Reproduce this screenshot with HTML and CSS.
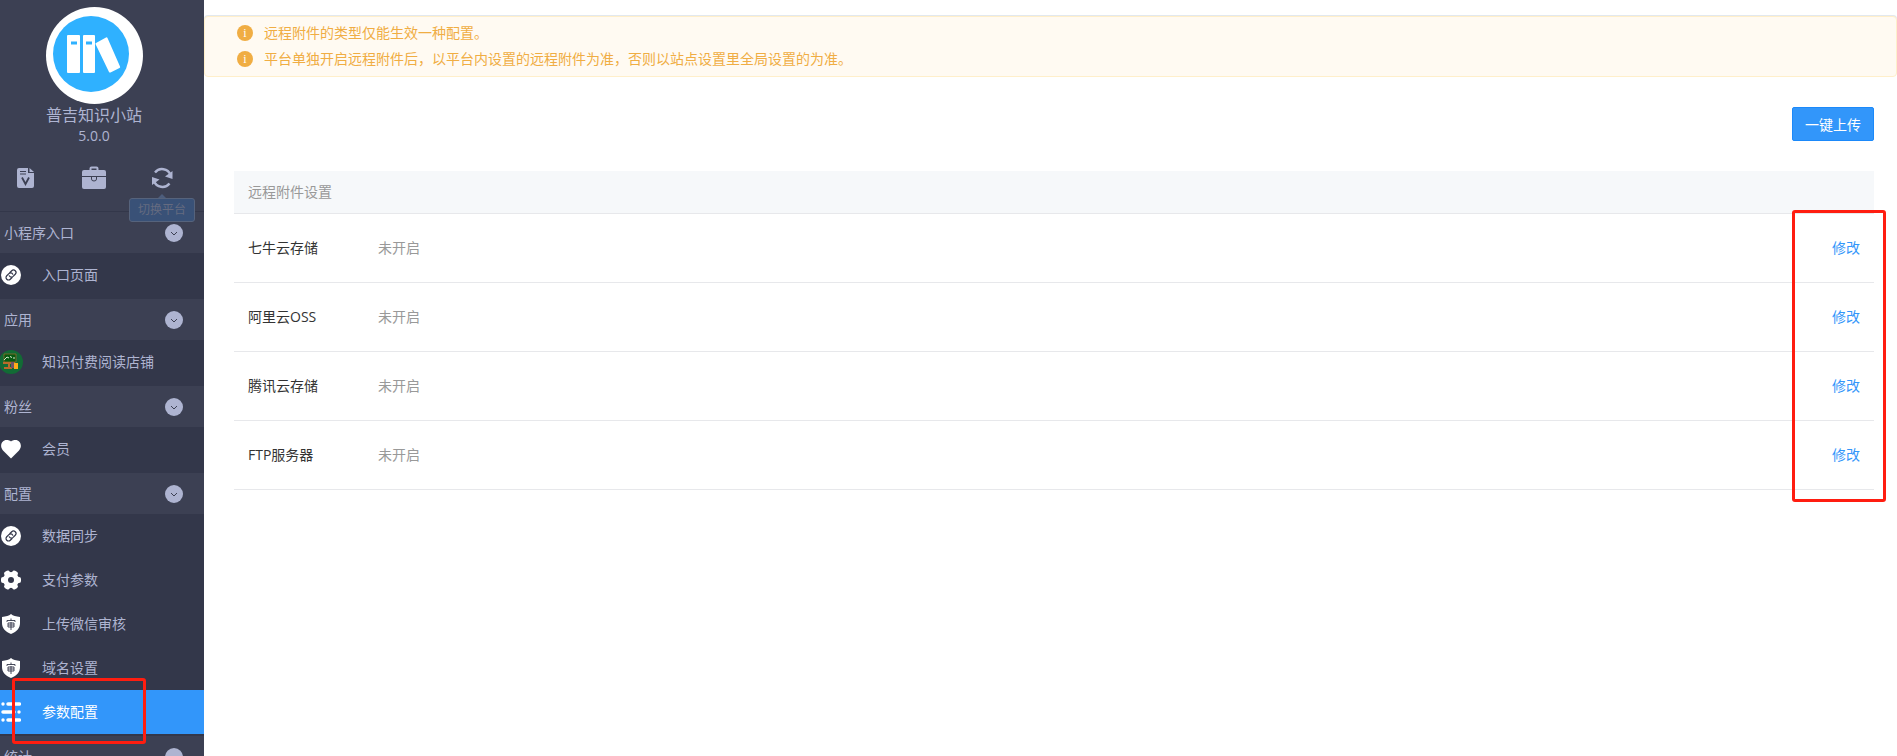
FILE: index.html
```
<!DOCTYPE html>
<html lang="zh-CN">
<head>
  <meta charset="UTF-8">
  <meta name="viewport" content="width=device-width, initial-scale=1.0">
  <title>远程附件设置</title>
  <link rel="stylesheet" href="styles.css">
</head>
<body>
  <svg width="0" height="0" class="sprite">
    <symbol id="down" viewBox="0 0 18 18">
      <circle cx="9" cy="9" r="9" fill="#aeb4d1"/>
      <path d="M6 8l3 3 3-3" fill="none" stroke="#3c4053"/>
    </symbol>
    <symbol id="link" viewBox="0 0 20 20">
      <circle cx="10" cy="10" r="10" fill="#fff"/>
      <g transform="rotate(-45 10 10)" fill="none" stroke="#33374a" stroke-width="1.200" stroke-linecap="round">
        <path d="M9 12.500H6.500a2.500 2.500 0 0 1 0-5h3a2.500 2.500 0 0 1 2.300 3.200"/>
        <path d="M11 7.500h2.500a2.500 2.500 0 0 1 0 5h-3a2.500 2.500 0 0 1-2.300-3.200"/>
      </g>
    </symbol>
    <symbol id="shield" viewBox="0 0 20 20">
      <path d="M10 0c2 1.800 5 2.600 9 3v6c0 5-3 8.500-9 11C4 17.500 1 14 1 9V3c4-.4 7-1.200 9-3z" fill="#fff"/>
      <path d="M10 4.500v2M6 8V6.500h8V8M7 9h6v4H7zM7 11h6M10 8v8" fill="none" stroke="#33374a" stroke-width=".9"/>
    </symbol>
  </svg>

  <div class="wrapper">
    <aside class="sidebar">
      <div class="brand">
        <svg class="logo" viewBox="0 0 97 97">
          <circle cx="48.500" cy="48.500" r="48.500" fill="#fff"/>
          <circle cx="45" cy="47" r="38" fill="#2fb1ff"/>
          <g fill="#fff">
            <rect x="21" y="28" width="13" height="38" rx="1"/>
            <rect x="37" y="28" width="12" height="38" rx="1"/>
            <path d="M50 36l10-5.500q1-.5 1.500.5L74 59.500q.5 1-.5 1.500l-9 4.500q-1 .3-1.500-.5L49.500 37q-.3-.6.500-1z"/>
          </g>
          <path d="M25 34.500h6v3h-6zM40 34.500h6v3h-6z" fill="#2fb1ff"/>
        </svg>
        <div class="name">普吉知识小站</div>
        <div class="version">5.0.0</div>
      </div>

      <div class="tools">
        <a href="#" aria-label="版本">
          <svg viewBox="0 0 24 24">
            <path d="M5 2h9v5h6v13q0 2-2 2H5q-2 0-2-2V4q0-2 2-2zM15.500 2L20 6h-4.500z" fill="#aeb4d1"/>
            <path d="M6 5.500h6M6 8h6" stroke="#3c4053"/>
            <path d="M8 11.500l3.500 6.500 3.500-6.500" fill="none" stroke="#3c4053" stroke-width="1.800"/>
          </svg>
        </a>
        <a href="#" aria-label="应用">
          <svg viewBox="0 0 24 24">
            <path d="M8.500 5V2.500q0-1 1-1h5q1 0 1 1V5" fill="none" stroke="#aeb4d1" stroke-width="2"/>
            <rect y="4" width="24" height="19" rx="2" fill="#aeb4d1"/>
            <path d="M0 10.500h24M9.500 11v2q0 2 2.500 2t2.500-2v-2" fill="none" stroke="#3c4053"/>
          </svg>
        </a>
        <a href="#" class="switch" aria-label="切换平台">
          <svg viewBox="0 0 24 24">
            <path d="M5 6.500A9 9 0 0 1 20.500 9M19.500 17.500A9 9 0 0 1 4 15" fill="none" stroke="#aeb4d1" stroke-width="2.400"/>
            <path d="M22.500 5v8l-7.500-2.500zM2 19v-8l7.500 2.500z" fill="#aeb4d1"/>
          </svg>
          <span class="tip">切换平台</span>
        </a>
      </div>

      <nav class="menu">
        <h3>小程序入口<svg><use href="#down"/></svg></h3>
        <ul>
          <li><a href="#"><svg><use href="#link"/></svg>入口页面</a></li>
        </ul>

        <h3>应用<svg><use href="#down"/></svg></h3>
        <ul>
          <li>
            <a href="#">
              <svg class="app-icon" viewBox="0 0 24 24">
                <circle cx="12" cy="12" r="12" fill="#126b35"/>
                <path d="M5 4h12v8H5z" fill="#075a12" stroke="#b86b2b" stroke-width=".6"/>
                <path d="M5 10l3-3 2 1M11 6.500l2 1M15 7v2" fill="none" stroke="#d8edcf"/>
                <path d="M4 12h12v2H4zM5 17h8v2H5zM9 14h2v3H9z" fill="#b86b2b"/>
                <path d="M12 12h3v6h-3z" fill="#73536a"/>
                <path d="M15 13h4v6h-4z" fill="#ffac19"/>
              </svg>知识付费阅读店铺
            </a>
          </li>
        </ul>

        <h3>粉丝<svg><use href="#down"/></svg></h3>
        <ul>
          <li>
            <a href="#">
              <svg viewBox="0 0 20 20"><path d="M10 19.500L2 11.500C-2 7 1 1 5.500 1 7.500 1 9 1.500 10 2.500 11 1.500 12.500 1 14.500 1 19 1 22 7 18 11.500z" fill="#fff"/></svg>会员
            </a>
          </li>
        </ul>

        <h3>配置<svg><use href="#down"/></svg></h3>
        <ul>
          <li><a href="#"><svg><use href="#link"/></svg>数据同步</a></li>
          <li>
            <a href="#">
              <svg viewBox="0 0 20 20">
                <g fill="#fff">
                  <circle cx="10" cy="10" r="8"/>
                  <rect x="0" y="7" width="20" height="6" rx="2"/>
                  <rect x="0" y="7" width="20" height="6" rx="2" transform="rotate(60 10 10)"/>
                  <rect x="0" y="7" width="20" height="6" rx="2" transform="rotate(120 10 10)"/>
                </g>
                <circle cx="10" cy="10" r="3" fill="#33374a"/>
              </svg>支付参数
            </a>
          </li>
          <li><a href="#"><svg><use href="#shield"/></svg>上传微信审核</a></li>
          <li><a href="#"><svg><use href="#shield"/></svg>域名设置</a></li>
          <li class="active">
            <a href="#">
              <svg viewBox="0 0 20 20">
                <path d="M7 2h11.500M2 10h11M7 18h11.500" stroke="#fff" stroke-width="3.500" stroke-linecap="round"/>
                <g fill="#fff"><circle cx="2" cy="2" r="1.700"/><circle cx="18" cy="10" r="1.700"/><circle cx="2" cy="18" r="1.700"/></g>
              </svg>参数配置
            </a>
            <span class="mark"></span>
          </li>
        </ul>

        <h3>统计<svg><use href="#down"/></svg></h3>
      </nav>
    </aside>

    <main class="main">
      <div class="alert">
        <p><i>i</i>远程附件的类型仅能生效一种配置。</p>
        <p><i>i</i>平台单独开启远程附件后，以平台内设置的远程附件为准，否则以站点设置里全局设置的为准。</p>
      </div>
      <div class="content">
        <div class="actions">
          <button type="button">一键上传</button>
        </div>
        <div class="table-box">
          <table>
            <thead>
              <tr><th colspan="3">远程附件设置</th></tr>
            </thead>
            <tbody>
              <tr><td class="title">七牛云存储</td><td class="status">未开启</td><td class="edit"><a href="#">修改</a></td></tr>
              <tr><td class="title">阿里云OSS</td><td class="status">未开启</td><td class="edit"><a href="#">修改</a></td></tr>
              <tr><td class="title">腾讯云存储</td><td class="status">未开启</td><td class="edit"><a href="#">修改</a></td></tr>
              <tr><td class="title">FTP服务器</td><td class="status">未开启</td><td class="edit"><a href="#">修改</a></td></tr>
            </tbody>
          </table>
          <span class="mark"></span>
        </div>
      </div>
    </main>
  </div>
</body>
</html>
```
FILE: styles.css
```
* {
  box-sizing: border-box;
}

body {
  margin: 0;
  font-family: "Open Sans", "Noto Sans CJK SC", sans-serif;
  font-size: 14px;
  line-height: 20px;
  color: #333;
  background-color: #fff;
}

a {
  text-decoration: none;
  color: #3296fa;
}

h3, ul, p {
  margin: 0;
  padding: 0;
}

ul {
  list-style: none;
}

svg {
  display: block;
}

.sprite {
  position: absolute;
}

.wrapper {
  display: flex;
  height: 100vh;
  overflow: hidden;
}

/* sidebar */
.sidebar {
  width: 204px;
  flex-shrink: 0;
  background-color: #3c4053;
  color: #aeb4d1;
}

.brand {
  display: flex;
  flex-direction: column;
  align-items: center;
  padding: 7px 16px 0 0;
}

.logo {
  width: 97px;
  height: 97px;
}

.name {
  font-size: 16px;
  line-height: 22px;
}

.version {
  line-height: 20px;
}

.tools {
  display: flex;
  justify-content: space-between;
  padding: 20px 30px 21px 14px;
  border-bottom: 1px solid #33374a;
}

.tools svg {
  width: 24px;
  height: 24px;
}

.switch {
  position: relative;
}

.tip {
  position: absolute;
  top: 32px;
  left: -21px;
  width: 66px;
  height: 24px;
  border: 1px solid #56637c;
  border-radius: 3px;
  background-color: #395177;
  color: #656b80;
  font-size: 12px;
  line-height: 22px;
  text-align: center;
}

.tip::before {
  content: "";
  position: absolute;
  left: 28px;
  top: -5px;
  border: 4px solid transparent;
  border-top: 0;
  border-bottom-color: #4d5d7c;
}

.menu h3 {
  display: flex;
  align-items: center;
  justify-content: space-between;
  height: 41px;
  padding: 0 21px 0 4px;
  font-size: 14px;
  font-weight: normal;
}

.menu h3 svg {
  width: 18px;
  height: 18px;
}

.menu ul {
  padding-bottom: 2px;
  background-color: #33374a;
}

.menu li {
  position: relative;
}

.menu li a {
  display: flex;
  align-items: center;
  height: 44px;
  padding-left: 1px;
  gap: 21px;
  color: #aeb4d1;
}

.menu li svg {
  width: 20px;
  height: 20px;
}

.menu li .app-icon {
  width: 24px;
  height: 24px;
  margin: 0 -2px;
}

.menu .active a {
  background-color: #3296fa;
  color: #fff;
}

/* red frames */
.mark {
  position: absolute;
  z-index: 1;
  border: 3px solid #ff1d10;
  border-radius: 3px;
  pointer-events: none;
}

.active .mark {
  top: -12px;
  bottom: -10px;
  left: 12px;
  width: 134px;
}

.table-box .mark {
  top: 39px;
  right: -12px;
  bottom: -12px;
  width: 94px;
}

/* main */
.main {
  flex: 1;
  padding-top: 16px;
}

.alert {
  padding: 3px 30px 4px 32px;
  border: 1px solid #ffefcb;
  border-radius: 4px;
  background-color: #fffaf2;
  box-shadow: 0 -1px 0 #e2e8ee;
  color: #f0ad43;
}

.alert p {
  display: flex;
  align-items: center;
  gap: 11px;
  line-height: 26px;
}

.alert i {
  width: 16px;
  height: 16px;
  border-radius: 50%;
  background-color: #f0ad43;
  color: #fff;
  font: 12px/16px "Liberation Serif", serif;
  text-align: center;
}

.content {
  padding: 30px 23px 0 30px;
}

.actions {
  display: flex;
  justify-content: flex-end;
  margin-bottom: 30px;
}

button {
  height: 34px;
  padding: 0 12px;
  border: 1px solid #1b89fa;
  border-radius: 2px;
  background-color: #3296fa;
  color: #fff;
  font-family: inherit;
  font-size: 14px;
  cursor: pointer;
}

.table-box {
  position: relative;
}

table {
  width: 100%;
  border-collapse: collapse;
}

th, td {
  padding: 0 14px;
  border-bottom: 1px solid #e7e8eb;
  text-align: left;
  font-weight: normal;
}

th {
  height: 42px;
  background-color: #f6f8fa;
  color: #999;
}

td {
  height: 69px;
}

.title {
  width: 130px;
}

.status {
  color: #999;
}

.edit {
  text-align: right;
}
```
